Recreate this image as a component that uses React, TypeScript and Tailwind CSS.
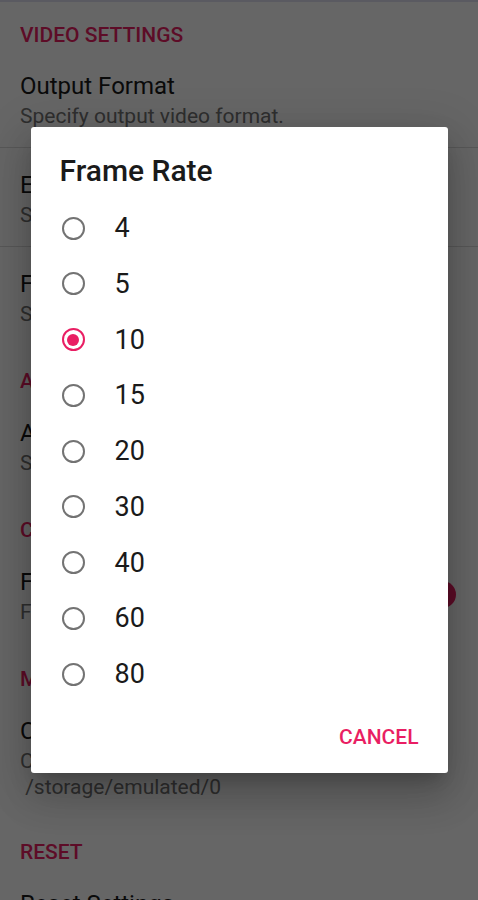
import React from 'react';

type Item = { title: string; summary: string; extra?: string; toggle?: boolean };
type Section = { header: string; items: Item[] };

const sections: Section[] = [
  {
    header: 'VIDEO SETTINGS',
    items: [
      { title: 'Output Format', summary: 'Specify output video format.' },
      { title: 'Encoder', summary: 'Specify video encoder.' },
      { title: 'Frame Rate', summary: 'Specify video frame rate.' },
    ],
  },
  {
    header: 'AUDIO SETTINGS',
    items: [{ title: 'Audio Source', summary: 'Specify audio source.' }],
  },
  {
    header: 'CONTROLS',
    items: [{ title: 'Floating Controls', summary: 'Floating controls while recording.', toggle: true }],
  },
  {
    header: 'MISC',
    items: [{ title: 'Change Save Location', summary: 'Current save location:', extra: ' /storage/emulated/0' }],
  },
  {
    header: 'RESET',
    items: [{ title: 'Reset Settings', summary: 'Restore all settings to default.' }],
  },
];

const rates = ['4', '5', '10', '15', '20', '30', '40', '60', '80'];
const selected = '10';

const Radio: React.FC<{ on: boolean }> = ({ on }) => (
  <span
    className={
      on
        ? 'flex h-[23px] w-[23px] shrink-0 items-center justify-center rounded-full border-2 border-[#e91e63]'
        : 'flex h-[23px] w-[23px] shrink-0 items-center justify-center rounded-full border-2 border-[#737373]'
    }
  >
    {on && <span className="h-[12px] w-[12px] rounded-full bg-[#e91e63]" />}
  </span>
);

const SettingsPage: React.FC = () => (
  <div className="bg-white">
    <div className="h-[2px] bg-[#e2e2f2]" />
    {sections.map((s, si) => (
      <div key={s.header}>
        <div className={si === 0 ? 'h-[47px] pl-[20px] pt-[20px]' : 'h-[50px] pl-[20px] pt-[22px]'}>
          <div className="text-[21px] font-medium leading-[26px] text-[#e91e63]">{s.header}</div>
        </div>
        {s.items.map((it, ii) => (
          <div
            key={it.title}
            className={
              (it.extra ? 'h-[123px] ' : 'h-[99px] ') +
              (ii < s.items.length - 1 ? 'border-b border-[#dcdcdc] ' : '') +
              'flex items-start justify-between pl-[20px] pr-[22px] pt-[22px]'
            }
          >
            <div>
              <div className="text-[24px] leading-[30px] text-[#1a1a1a]">{it.title}</div>
              <div className="text-[21px] leading-[30px] text-[#757575]">{it.summary}</div>
              {it.extra && <div className="whitespace-pre text-[21px] leading-[22px] text-[#757575]">{it.extra}</div>}
            </div>
            {it.toggle && (
              <div className="relative mt-[14px] flex h-[27px] w-[46px] items-center">
                <div className="h-[19px] w-[44px] rounded-full bg-[#f48fb1]" />
                <div className="absolute right-0 top-0 h-[27px] w-[27px] rounded-full bg-[#e91e63]" />
              </div>
            )}
          </div>
        ))}
      </div>
    ))}
  </div>
);

export default function App() {
  return (
    <div className="relative h-[900px] w-[478px] overflow-hidden font-['Roboto',sans-serif]">
      <SettingsPage />
      <div className="absolute inset-0 flex items-center justify-center bg-black/60">
        <div className="w-[417px] rounded-[3px] bg-white shadow-[0_11px_15px_-7px_rgba(0,0,0,0.2),0_24px_38px_3px_rgba(0,0,0,0.14),0_9px_46px_8px_rgba(0,0,0,0.12)]">
          <div className="pl-[29px] pt-[27px] pb-[12px] text-[30px] font-medium leading-[34px] text-[#1a1a1a]">
            Frame Rate
          </div>
          <div>
            {rates.map((r) => (
              <div key={r} className="flex h-[55.75px] items-center gap-[30px] pl-[31px]">
                <Radio on={r === selected} />
                <span className="text-[27px] leading-[32px] text-[#1a1a1a]">{r}</span>
              </div>
            ))}
          </div>
          <div className="flex h-[71px] items-center justify-end pr-[29px]">
            <span className="text-[21px] font-medium text-[#e91e63]">CANCEL</span>
          </div>
        </div>
      </div>
    </div>
  );
}
